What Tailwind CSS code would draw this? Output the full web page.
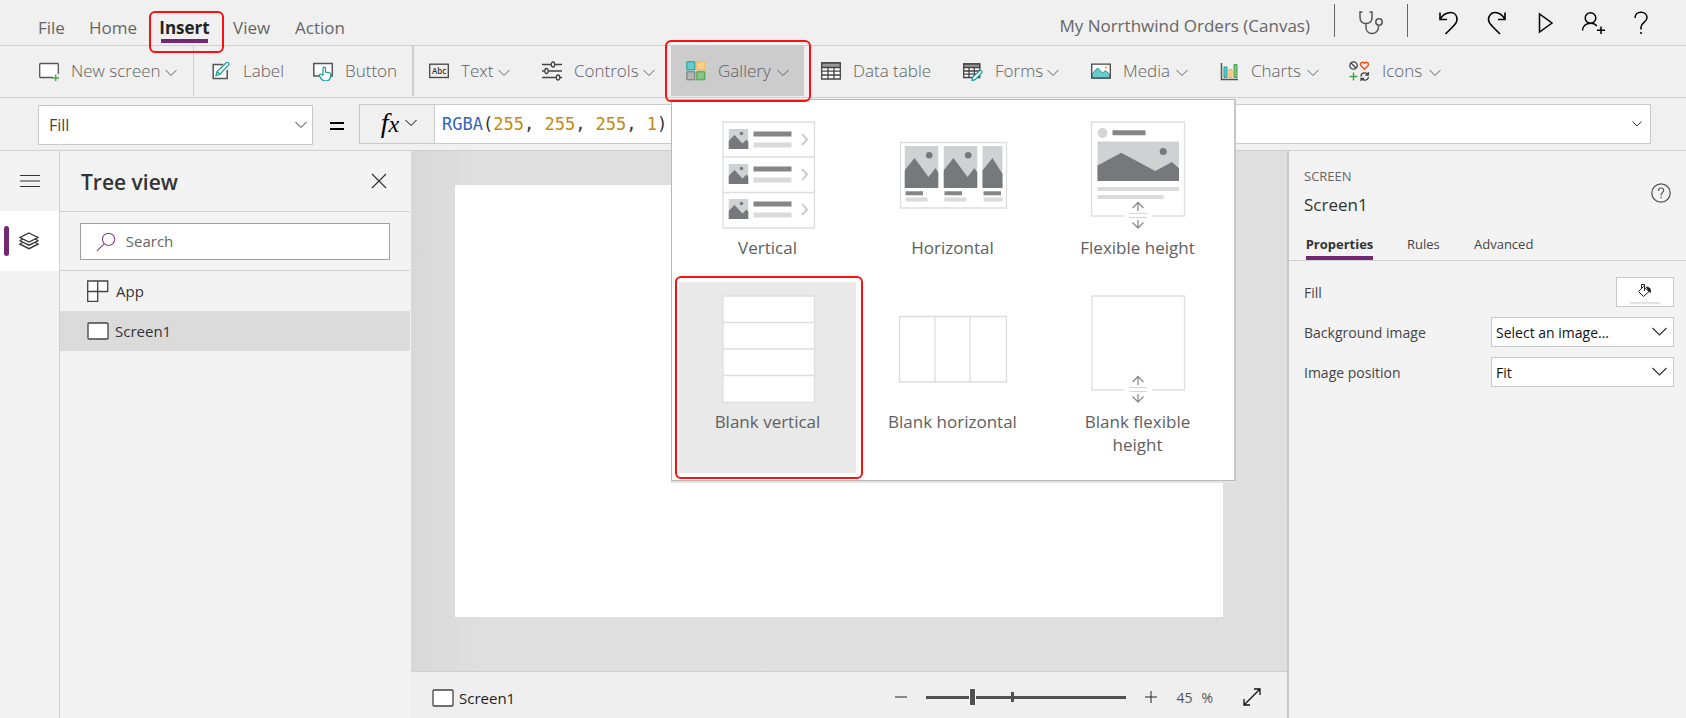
<!DOCTYPE html>
<html lang="en">
<head>
<meta charset="utf-8">
<title>My Norrthwind Orders (Canvas)</title>
<meta name="viewport" content="width=device-width, initial-scale=1">
<script src="https://cdn.jsdelivr.net/npm/@tailwindcss/browser@4"></script>
</head>
<body class="flex h-screen flex-col overflow-hidden bg-[#f0f0f0] font-['Segoe_UI','Open_Sans',sans-serif] text-[#333]">

<svg class="hidden" aria-hidden="true">
  <defs>
    <symbol id="chev" viewBox="0 0 12 8"><path d="M.5 1 6 6.500 11.500 1" fill="none" stroke="currentColor"/></symbol>
    <symbol id="screen" viewBox="0 0 22 18"><rect x="1" y="1" width="20" height="16" rx="1" fill="#fff" stroke="#444" stroke-width="1.300"/></symbol>
    <symbol id="thumb" viewBox="0 0 20 20"><path fill="#d0d1d3" d="M0 0h20v20H0z"/><path fill="#77787b" d="M0 12 6 6l8 8.500 4-4L20 13v7H0z"/><circle cx="13" cy="4.500" r="1.800" fill="#77787b"/></symbol>
    <symbol id="photo" viewBox="0 0 34 42"><path fill="#d0d1d3" d="M0 0h34v42H0z"/><path fill="#77787b" d="M0 24.500 10 12l14 19 7-9 3 5v15H0z"/><circle cx="24.700" cy="9.300" r="3.300" fill="#77787b"/></symbol>
    <symbol id="row" viewBox="0 0 92 35"><use href="#thumb" x="6" y="7" width="20" height="20"/><path fill="#858585" d="M31 9.500h38v5H31z"/><path fill="#dadada" d="M31 20.500h38v5H31z"/><path d="m79.500 12 5 5.500-5 5.500" fill="none" stroke="#d0d0d0" stroke-width="2.200"/></symbol>
    <symbol id="stretch" viewBox="0 0 28 28"><path d="M0 10h28v9H0z" fill="#fff"/><path d="M5 12.500h18M5 16.500h18" stroke="#d6d6d6" stroke-width="1.200"/><path d="M14 10V2M8.500 7 14 1.500 19.500 7M14 19v7M8.500 21.500 14 27l5.500-5.500" fill="none" stroke="#8c8c8c" stroke-width="1.300"/></symbol>
  </defs>
</svg>

<!-- Title bar -->
<header class="flex h-[46px] shrink-0 items-stretch justify-between border-b border-[#cfcfcf] pr-[33px] pl-[38px] text-[17px] text-[#666]">
  <nav class="flex items-center gap-[25px] pt-[10px] leading-6">
    <button class="w-[26px]">File</button>
    <button class="w-[47px]">Home</button>
    <div class="relative w-[47px]">
      <button class="flex w-full justify-center border-b-4 border-[#742774] pt-1 leading-[22px] font-bold text-[#222]">Insert</button>
      <span class="pointer-events-none absolute -top-0.5 -left-3 z-30 h-[42px] w-[75px] rounded-md border-2 border-[#fb1010]"></span>
    </div>
    <button class="w-[37px]">View</button>
    <button class="w-[48px]">Action</button>
  </nav>
  <div class="flex items-center text-black">
    <span class="mr-6 pt-[6px] text-[#666]">My Norrthwind Orders (Canvas)</span>
    <span class="mb-1 h-[33px] w-px bg-[#666]"></span>
    <button aria-label="App checker" class="mx-6"><svg class="h-6 w-6" viewBox="0 0 24 24" fill="none" stroke="#555" stroke-width="1.500"><path d="M3.500 1H1v5c0 4 2 6.500 6 6.500S13 10 13 6V1h-2.500M7 12.500V16c0 4 2.500 6.500 6 6.500s6.500-2.500 6.500-6.500v-1.500"/><circle cx="20" cy="11" r="3.200"/></svg></button>
    <span class="mb-1 h-[33px] w-px bg-[#666]"></span>
    <div class="flex items-center gap-6 pl-[29px]">
      <button aria-label="Undo"><svg class="h-6 w-6" viewBox="0 0 24 24" fill="none" stroke="currentColor" stroke-width="1.600"><path d="M3 1.500v7h7M3 8.500C6 3 10 1.500 14 1.500c4 0 6 3.500 6 7 0 3-2 5-4 7L8.500 23"/></svg></button>
      <button aria-label="Redo"><svg class="h-6 w-6" viewBox="0 0 24 24" fill="none" stroke="currentColor" stroke-width="1.600"><path d="M20 1.500v7h-7M20 8.500C17 3 14 1.500 10 1.500c-4 0-6.500 3.500-6.500 7 0 3 2 5 4 7L15 23"/></svg></button>
      <button aria-label="Preview the app"><svg class="h-6 w-6" viewBox="0 0 24 24" fill="none" stroke="currentColor" stroke-width="1.500"><path d="M6.500 3v18L19 12z"/></svg></button>
      <button aria-label="Share"><svg class="h-6 w-6" viewBox="0 0 24 24" fill="none" stroke="currentColor" stroke-width="1.500"><circle cx="9.500" cy="7" r="5.300"/><path d="M1.500 19.500c0-4.500 3.500-7.200 8-7.200 2.800 0 5 1 6.300 2.700M20 15.500V23M16 19.300h8"/></svg></button>
      <button aria-label="Help"><svg class="h-6 w-6" viewBox="0 0 24 24" fill="none" stroke="currentColor" stroke-width="1.500"><path d="M6 7c0-3.500 2.500-5.700 6-5.700S18 3.500 18 6.700c0 4.300-6 5-6 9.300v2.500M12 21v2"/></svg></button>
    </div>
  </div>
</header>

<!-- Ribbon -->
<div class="flex h-[52px] shrink-0 items-start border-b border-[#cfcfcf] pl-[23px] text-[17px] font-light whitespace-nowrap text-[#606060]">
  <button class="flex h-[50px] items-center gap-3 px-4"><svg class="h-5 w-5" viewBox="0 0 20 20" fill="none"><path d="M14 16.500H1.500a.8.800 0 0 1-.8-.8V3.300c0-.4.400-.8.800-.8h17c.4 0 .8.400.8.800V13" fill="#fff" stroke="#555" stroke-width="1.300"/><path d="M16.700 13.500v7M13.200 17h7" stroke="#4ba84b" stroke-width="1.500"/></svg><span class="w-[88px] text-left">New screen</span><svg class="-ml-1.5 mt-1 h-2 w-3"><use href="#chev"/></svg></button>
  <span class="mr-0.5 h-[50px] w-px bg-[#cfcfcf]"></span>
  <button class="flex h-[50px] items-center gap-[11px] px-4"><svg class="h-5 w-5" viewBox="0 0 20 20" fill="none"><path d="M11 3.500H1.200v14h14V9" fill="#f8f8f8" stroke="#555" stroke-width="1.500"/><path d="m4 14.500 1-4 9.500-9c1-.8 3.300 1 2.400 2.200l-9 9.500zM5 10.500l3 2.700" fill="#fff" stroke="#149c98" stroke-width="1.200"/></svg><span class="w-[38px] text-left">Label</span></button>
  <button class="flex h-[50px] items-center gap-3 px-4"><svg class="h-5 w-5" viewBox="0 0 20 20" fill="none"><path d="M6 15H.8V2.500h18.500V15H18" fill="#fff" stroke="#555" stroke-width="1.500"/><path d="M10 14V7.300c0-1.700 2.500-1.700 2.500 0v3.800l4 .7c1 .2 1.500.8 1.400 1.800-.2 3.500-1.600 6.400-5 6.400-3.500 0-5.600-2.500-6.600-5.500-.4-1.300 1.400-1.800 2.200-.8z" fill="#fff" stroke="#149c98" stroke-width="1.200"/></svg><span class="w-[51px] text-left">Button</span></button>
  <span class="h-[50px] w-0.5 bg-[#cfcfcf]"></span>
  <button class="flex h-[50px] items-center gap-3 px-[15px]"><svg class="h-5 w-5" viewBox="0 0 20 20" fill="none"><rect x=".7" y="3.200" width="18.600" height="13.300" stroke="#444" stroke-width="1.300"/><text x="10" y="12.800" text-anchor="middle" fill="#333" font-family="Open Sans, sans-serif" font-size="8" font-weight="600">Abc</text></svg><span class="w-[31px] text-left">Text</span><svg class="-ml-1.5 mt-1 h-2 w-3"><use href="#chev"/></svg></button>
  <button class="flex h-[50px] items-center gap-3 pr-4 pl-[17px]"><svg class="h-5 w-5" viewBox="0 0 20 20" fill="none" stroke="#444" stroke-width="1.300"><path d="M0 3.500h9M13 3.500h7M0 10h2.500M6.500 10H20M0 16.500h14M18 16.500h2"/><ellipse cx="11" cy="3.500" rx="1.700" ry="2.500"/><ellipse cx="4.500" cy="10" rx="1.700" ry="2.500"/><ellipse cx="16" cy="16.500" rx="1.700" ry="2.500"/></svg><span class="w-[63px] text-left">Controls</span><svg class="-ml-1.5 mt-1 h-2 w-3"><use href="#chev"/></svg></button>
  <div class="relative">
    <button aria-expanded="true" class="flex h-[50px] items-center gap-3 bg-[#ccc] px-[15px]"><svg class="h-5 w-5" viewBox="0 0 20 20"><path fill="#66cccc" stroke="#149c98" d="M.8.800h8v8h-8z"/><path fill="#fdd18b" stroke="#fdb447" d="M10.800.800h8v8h-8z"/><path fill="#b5b5b5" stroke="#777" d="M.8 10.800h8v8h-8z"/><path fill="#86c586" stroke="#43a047" d="M10.800 10.800h8v8h-8z"/></svg><span class="w-[53px] text-left">Gallery</span><svg class="-ml-1.5 mt-1 h-2 w-3"><use href="#chev"/></svg></button>
    <span class="pointer-events-none absolute -top-1.5 -left-1.5 z-30 h-[62px] w-[146px] rounded-md border-2 border-[#fb1010]"></span>
    <!-- Gallery menu -->
    <div role="menu" class="absolute top-[53px] left-0 z-20 grid w-[565px] grid-cols-[repeat(3,185px)] border border-r-2 border-[#b9b9b9] border-r-[#c8c8c8] bg-white pt-2 pr-1 pb-[7px] pl-[3px] text-[17px] leading-[23px] font-normal text-[#606060] shadow-[0_2px_1px_#e4e4e4]">
      <button role="menuitem" class="flex h-[174px] flex-col items-center gap-[5px] pt-[13px]">
        <svg class="h-[110px] w-[110px]" viewBox="0 0 110 110"><path d="M10 1h91.500v106H10zM10 36h91.500M10 71.500h91.500" fill="#fff" stroke="#dedede" stroke-width="1.300"/><use href="#row" x="9.500" y="1" width="92" height="35"/><use href="#row" x="9.500" y="36" width="92" height="35"/><use href="#row" x="9.500" y="71" width="92" height="35"/></svg>
        Vertical
      </button>
      <button role="menuitem" class="flex h-[174px] flex-col items-center gap-[5px] pt-[13px]">
        <svg class="h-[110px] w-[110px]" viewBox="0 0 110 110"><path d="M2.500 21.500h106V87H2.500z" fill="#fff" stroke="#dedede" stroke-width="1.300"/><use href="#photo" x="6.500" y="25" width="34" height="42"/><use href="#photo" x="45.500" y="25" width="34" height="42"/><path fill="#d0d1d3" d="M84.500 25h20v42h-20z"/><path fill="#77787b" d="M84.500 49.500 94.500 37l10 16v14h-20z"/><path d="M7.500 72.300H25M46.500 72.300H64M85.500 72.300H103" stroke="#858585" stroke-width="4"/><path d="M7.500 78.500h22M46.500 78.500h22M85.500 78.500h19" stroke="#dadada" stroke-width="4"/></svg>
        Horizontal
      </button>
      <button role="menuitem" class="flex h-[174px] flex-col items-center gap-[5px] pt-[13px]">
        <svg class="h-[110px] w-[110px]" viewBox="0 0 110 110"><path d="M8.500 1h93v94h-93z" fill="#fff" stroke="#dedede" stroke-width="1.300"/><circle cx="19.500" cy="12" r="5" fill="#d6d6d6"/><path fill="#858585" d="M29.500 9.300h33v5h-33z"/><path fill="#d0d1d3" d="M14.500 20.500H96V60H14.500z"/><path fill="#77787b" d="m14.500 44.500 23.700-12.800 34 18.300L89 41l7 6.500V60H14.500z"/><circle cx="80.200" cy="30.500" r="3.500" fill="#77787b"/><path d="M14.500 68H96M14.500 76h66" stroke="#dadada" stroke-width="4"/><use href="#stretch" x="41" y="80" width="28" height="28"/></svg>
        Flexible height
      </button>
      <div class="relative">
        <button role="menuitem" class="mx-auto flex h-[191px] w-[177px] flex-col items-center gap-[5px] bg-[#e9e9e9] pt-[13px]">
          <svg class="h-[110px] w-[110px]" viewBox="0 0 110 110"><path d="M10 1h91.500v106.500H10zM10 27.500h91.500M10 54h91.500M10 80.500h91.500" fill="#fff" stroke="#dedede" stroke-width="1.300"/></svg>
          Blank vertical
        </button>
        <span class="pointer-events-none absolute -top-1.5 left-0 h-[203px] w-[188px] rounded-md border-2 border-[#fb1010]"></span>
      </div>
      <button role="menuitem" class="flex h-[191px] flex-col items-center gap-[5px] pt-[13px]">
        <svg class="h-[110px] w-[110px]" viewBox="0 0 110 110"><path d="M1.500 21.500h107V87H1.500zM37 21.500V87M72 21.500V87" fill="#fff" stroke="#dedede" stroke-width="1.300"/></svg>
        Blank horizontal
      </button>
      <button role="menuitem" class="flex h-[191px] flex-col items-center gap-[5px] pt-[13px]">
        <svg class="h-[110px] w-[110px]" viewBox="0 0 110 110"><path d="M9 1h92.500v94H9z" fill="#fff" stroke="#dedede" stroke-width="1.300"/><use href="#stretch" x="41" y="80" width="28" height="28"/></svg>
        <span class="w-[120px] whitespace-normal">Blank flexible height</span>
      </button>
    </div>
  </div>
  <button class="flex h-[50px] items-center gap-3 pr-4 pl-[17px]"><svg class="h-5 w-5" viewBox="0 0 20 20" fill="none" stroke="#444" stroke-width="1.300"><path fill="#fff" d="M.7 2h18.600v16H.7z"/><path fill="#999" d="M.7 2h18.600v4.500H.7z"/><path d="M.7 10.200h18.600M.7 14h18.600M7 6.500V18M13 6.500V18"/></svg><span class="w-[78px] text-left">Data table</span></button>
  <button class="flex h-[50px] items-center gap-3 px-4"><svg class="h-5 w-5" viewBox="0 0 20 20" fill="none" stroke="#444" stroke-width="1.300"><path fill="#fff" d="M.7 3h16v13.500H.7z"/><path fill="#999" d="M.7 3h16v3.500H.7z"/><path d="M.7 10h16M.7 13.200h16M6 6.500v10M11.300 6.500v10"/><path d="m9 19.500.8-3.500 7-6.500c1-.7 3 1 2 2.200l-6.600 7z" fill="#fff" stroke="#149c98" stroke-width="1.200"/></svg><span class="w-[46px] text-left">Forms</span><svg class="-ml-1.5 mt-1 h-2 w-3"><use href="#chev"/></svg></button>
  <button class="flex h-[50px] items-center gap-3 px-4"><svg class="h-5 w-5" viewBox="0 0 20 20"><path fill="#fff" d="M.7 3.200h18.600v14H.7z"/><path fill="#66cccc" stroke="#149c98" d="M1 13 6.500 7l5 5 3-2.500L19 14v3H1z"/><circle cx="15" cy="6.500" r="1.200" fill="#fdb447"/><path fill="none" stroke="#444" stroke-width="1.300" d="M.7 3.200h18.600v14H.7z"/></svg><span class="w-[47px] text-left">Media</span><svg class="-ml-1.5 mt-1 h-2 w-3"><use href="#chev"/></svg></button>
  <button class="flex h-[50px] items-center gap-[11px] px-4"><svg class="h-5 w-5" viewBox="0 0 20 20"><path d="M1.500 2v16.500H18" fill="none" stroke="#555" stroke-width="1.500"/><path fill="#66cccc" stroke="#149c98" d="M4 6h3v10.500H4z"/><path fill="#fdd18b" stroke="#fdb447" d="M9 8.500h3v8H9z"/><path fill="#86c586" stroke="#43a047" d="M14 3.500h3v13h-3z"/></svg><span class="w-[51px] text-left">Charts</span><svg class="-ml-1.5 mt-1 h-2 w-3"><use href="#chev"/></svg></button>
  <button class="flex h-[50px] items-center gap-[13px] px-[14px]"><svg class="h-5 w-5" viewBox="0 0 20 20" fill="none" stroke="#444" stroke-width="1.300"><circle cx="4.500" cy="4.500" r="3.700"/><path d="m2 2 5 5"/><path stroke="#f4511e" stroke-width="1.400" d="M15.500 8.300 12 4.800c-1.700-2 1.300-5 3.500-2.500 2.200-2.500 5.200.5 3.500 2.500z"/><path stroke="#43a047" stroke-width="1.500" d="M4.500 11.500v8M.5 15.500h8"/><path d="M12 15.500c0-4 5-4.700 7-2M19.300 11v3h-3M19.500 16c-.5 3.500-5 4.300-7 1.500M12 20.300v-3h3"/></svg><span class="w-[40px] text-left">Icons</span><svg class="-ml-1.5 mt-1 h-2 w-3"><use href="#chev"/></svg></button>
</div>

<!-- Formula bar -->
<div class="flex h-[53px] shrink-0 items-start border-b border-[#cfcfcf] pt-1.5 pr-[35px] pl-[38px]">
  <div class="relative mt-px h-10 w-[275px]">
    <select aria-label="Property" class="h-full w-full appearance-none border border-[#c8c8c8] bg-white pl-2.5 text-[16px] text-[#444]"><option>Fill</option></select>
    <svg class="pointer-events-none absolute top-4 right-1.5 h-2 w-3 text-[#333]"><use href="#chev"/></svg>
  </div>
  <svg class="mt-[17px] mr-[15px] ml-[17px] h-2.5 w-[14px]" viewBox="0 0 14 10"><path d="M0 1h14v2H0zM0 7h14v2H0z"/></svg>
  <button class="flex h-10 w-[76px] items-center justify-center gap-1.5 border border-[#c8c8c8] pb-0.5 pl-1 text-black"><span class="font-['Liberation_Serif',serif] text-[28px] leading-8 italic">f<span class="text-[24px]">x</span></span><svg class="h-2 w-3"><use href="#chev"/></svg></button>
  <div class="-ml-px flex h-10 grow items-center justify-between border border-[#c8c8c8] bg-white pr-2 pl-[7px]">
    <code contenteditable="true" aria-label="Formula" class="pt-px font-['DejaVu_Sans_Mono',monospace] text-[17px] text-[#333] outline-none"><span class="text-[#3165bb]">RGBA</span>(<span class="text-[#c08a13]">255</span>, <span class="text-[#c08a13]">255</span>, <span class="text-[#c08a13]">255</span>, <span class="text-[#c08a13]">1</span>)</code>
    <svg class="h-2 w-2.5" viewBox="0 0 10 8"><path d="M.5 1.500 5 6l4.500-4.500" fill="none" stroke="#333"/></svg>
  </div>
</div>

<div class="flex min-h-0 grow">
  <!-- Rail -->
  <nav class="flex w-[60px] shrink-0 flex-col border-r border-[#cfcfcf] bg-[#f3f3f3]">
    <button aria-label="Menu" class="flex h-[60px] items-center justify-center"><svg class="h-3 w-5" viewBox="0 0 20 12"><path d="M0 .5h20M0 6h20M0 11.500h20" stroke="#333"/></svg></button>
    <button aria-label="Tree view" class="flex h-[60px] items-center bg-white pl-1"><span class="mr-[10px] h-[30px] w-[5px] rounded-sm bg-[#742774]"></span><svg class="h-5 w-5" viewBox="0 0 20 20" fill="none" stroke="#333" stroke-width="1.300"><path d="m10 2 9 4.500-9 4.500-9-4.500zM3.500 8 1 9.800l9 4.400 9-4.400L16.500 8M3.500 11.500 1 13.200l9 4.500 9-4.500-2.500-1.700"/></svg></button>
  </nav>

  <!-- Tree view -->
  <aside class="w-[351px] shrink-0 bg-[#f3f3f3] pr-px text-[15px]">
    <div class="flex h-[61px] items-center justify-between border-b border-[#cfcfcf] pr-[23px] pl-[21px]">
      <h2 class="pt-[3px] text-[21px] font-semibold">Tree view</h2>
      <button aria-label="Close"><svg class="h-4 w-4" viewBox="0 0 16 16"><path d="m1 1 14 14M15 1 1 15" stroke="#333" stroke-width="1.200"/></svg></button>
    </div>
    <div class="border-b border-[#cfcfcf] pt-[11px] pr-5 pb-2.5 pl-5">
      <label class="flex h-[37px] items-center gap-2.5 border border-[#a0a0a0] bg-white pl-[15px]">
        <svg class="h-[22px] w-[22px]" viewBox="0 0 22 22" fill="none" stroke="#8d3f8d" stroke-width="1.200"><circle cx="14" cy="8" r="6.800"/><path d="m9 13-8 8"/></svg>
        <input type="search" placeholder="Search" aria-label="Search" class="w-full bg-transparent outline-none placeholder:text-[#666]">
      </label>
    </div>
    <ul>
      <li><button class="flex h-10 w-full items-center gap-[7px] pl-[27px]"><svg class="h-[22px] w-[22px]" viewBox="0 0 22 22" fill="#fff" stroke="#444" stroke-width="1.300"><path d="M.7 1h20v10.500h-10V21.500H.7zM10.700 1v10.500M.7 11.500h10"/></svg>App</button></li>
      <li><button class="flex h-10 w-full items-center gap-[5px] bg-[#dbdbdb] pl-[26px]"><svg class="h-[18px] w-6"><use href="#screen"/></svg>Screen1</button></li>
    </ul>
  </aside>

  <!-- Canvas -->
  <main class="flex min-w-0 grow flex-col border-r-2 border-[#c8c8c8]">
    <div class="grow bg-[#dfdfdf] bg-linear-to-r from-[#d8d8d8] to-[#dfdfdf] to-8% pt-[34px] pr-16 pb-[54px] pl-11">
      <div class="h-full bg-white"></div>
    </div>
    <footer class="flex h-[47px] shrink-0 items-center border-t border-[#cfcfcf] bg-[#efefef] pt-1 pr-[26px] pl-[21px]">
      <button class="flex items-center gap-[5px] pt-0.5 text-[15px] text-[#222]"><svg class="h-[18px] w-[22px]"><use href="#screen"/></svg>Screen1</button>
      <div class="ml-auto flex items-center">
        <button aria-label="Zoom out"><svg class="h-3 w-3" viewBox="0 0 12 12"><path d="M0 6h12" stroke="#222"/></svg></button>
        <div class="relative mr-[19px] ml-[19px] flex h-[18px] w-[200px] items-center">
          <input type="range" min="10" max="170" value="45" aria-label="Zoom" class="h-[3px] w-full appearance-none bg-[#505050] [&::-webkit-slider-thumb]:h-[18px] [&::-webkit-slider-thumb]:w-[7px] [&::-webkit-slider-thumb]:appearance-none [&::-webkit-slider-thumb]:border [&::-webkit-slider-thumb]:border-white [&::-webkit-slider-thumb]:bg-[#505050]">
          <span class="pointer-events-none absolute top-1 left-[85px] h-2.5 w-[3px] bg-[#505050]"></span>
        </div>
        <button aria-label="Zoom in"><svg class="h-3 w-3" viewBox="0 0 12 12"><path d="M0 6h12M6 0v12" stroke="#222"/></svg></button>
        <span class="ml-[19px] text-[14px] text-[#555]">45</span>
        <span class="ml-[9px] text-[14px] text-[#555]">%</span>
        <button aria-label="Fit to window" class="ml-[30px]"><svg class="h-[18px] w-[18px]" viewBox="0 0 18 18" fill="none" stroke="#111" stroke-width="1.300"><path d="m1 17 16-16M11 1h6v6M1 11v6h6"/></svg></button>
      </div>
    </footer>
  </main>

  <!-- Properties -->
  <aside class="w-[397px] shrink-0 bg-[#f3f3f3] text-[15px] text-[#444]">
    <div class="flex items-center justify-between pt-[13px] pr-[15px] pl-[15px]">
      <div>
        <div class="text-[13px] leading-6 text-[#666]">SCREEN</div>
        <div class="pt-[3px] pb-0.5 text-[17px] leading-7 text-[#333]">Screen1</div>
      </div>
      <button aria-label="Help"><svg class="h-5 w-5" viewBox="0 0 20 20" fill="none" stroke="#555" stroke-width="1.200"><circle cx="10" cy="10" r="9.200"/><path d="M7.500 8c0-2 1-3 2.600-3s2.500 1 2.500 2.500c0 2-2.500 2.300-2.500 4.500v.6M10.100 13.800v1.400"/></svg></button>
    </div>
    <div role="tablist" class="flex h-10 items-end gap-[34px] border-b border-[#cfcfcf] pl-[17px] text-[13px]">
      <button role="tab" aria-selected="true" class="flex h-[35px] w-[67px] items-end justify-center border-b-4 border-[#742774] pb-0.5 font-bold text-[#333]">Properties</button>
      <button role="tab" class="flex h-[35px] w-[33px] items-end border-b-4 border-transparent pb-0.5">Rules</button>
      <button role="tab" class="flex h-[35px] items-end border-b-4 border-transparent pb-0.5">Advanced</button>
    </div>
    <div class="grid gap-2.5 pt-4 pr-3 pl-[15px] text-[14px]">
      <div class="flex h-[30px] items-center justify-between"><label for="fill">Fill</label>
        <button id="fill" aria-label="Fill" class="flex h-[30px] w-[58px] flex-col items-center border border-[#c8c8c8] bg-white pt-1"><svg class="h-4 w-4" viewBox="0 0 16 16" fill="none" stroke="#222" stroke-width="1"><path d="M6.500 4.500 12 9.500l-5.500 5L1.500 9.500zM4.500 6.500v-4h3V9"/><path d="M9.500 5c3.200.3 4.600 2.200 3.800 5.500L12 9z" fill="#111"/></svg><span class="h-1 w-[30px] bg-white shadow-[0_2px_2px_#ddd]"></span></button></div>
      <div class="flex h-[30px] items-center justify-between"><label for="bg">Background image</label>
        <div class="relative h-full w-[183px]"><select id="bg" class="h-full w-full appearance-none border border-[#c8c8c8] bg-white pl-1 text-[14px] text-[#111]"><option>Select an image...</option></select><svg class="pointer-events-none absolute top-[10px] right-[7px] h-[10px] w-[15px]" viewBox="0 0 15 10"><path d="m.5 1 7 7 7-7" fill="none" stroke="#333" stroke-width="1.200"/></svg></div></div>
      <div class="flex h-[30px] items-center justify-between"><label for="pos">Image position</label>
        <div class="relative h-full w-[183px]"><select id="pos" class="h-full w-full appearance-none border border-[#c8c8c8] bg-white pl-1 text-[14px] text-[#111]"><option>Fit</option></select><svg class="pointer-events-none absolute top-[10px] right-[7px] h-[10px] w-[15px]" viewBox="0 0 15 10"><path d="m.5 1 7 7 7-7" fill="none" stroke="#333" stroke-width="1.200"/></svg></div></div>
    </div>
  </aside>
</div>
</body>
</html>
